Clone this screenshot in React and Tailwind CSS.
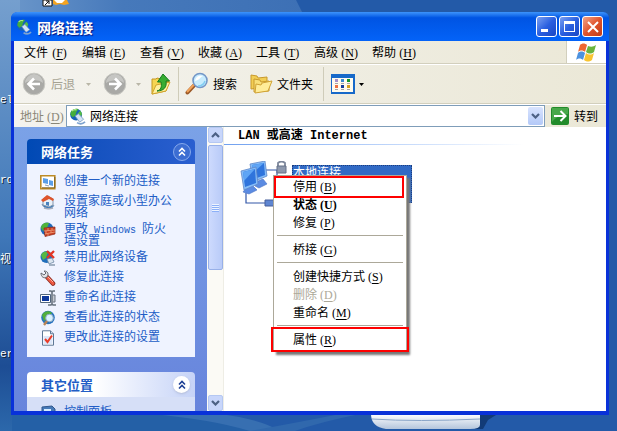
import React from 'react';

const cjk = "font-['Noto_Sans_CJK_SC',sans-serif]";

function Key({ k }) {
  return (
    <span className="inline-block w-5 pl-[3px] whitespace-nowrap font-['Liberation_Serif',serif] text-[12px] leading-3">
      (<span className="underline underline-offset-2">{k}</span>)
    </span>
  );
}

function Globe({ className = '' }) {
  return (
    <svg viewBox="0 0 18 18" className={`shrink-0 ${className}`} aria-hidden="true">
      <circle cx="7.5" cy="7" r="6.3" fill="#1763b8" />
      <path d="M2 4C4 .8 8 .2 10 1.2L8 4 6.8 8.2 3.7 9.8 1.4 7Z" fill="#45ae3c" />
      <path d="M9 6 12 3l1.8 3-1.5 4-3-1Z" fill="#55bd42" />
      <path d="M3 3.2C4.7 1.5 6.5 1.5 8 2" stroke="#b7ed91" strokeWidth="1.2" fill="none" />
      <path d="m6.5 8.5 3.5-2.5 5.5 6-4.2 3Z" fill="#d3e2f4" stroke="#6f93bd" strokeWidth=".8" />
      <path d="M8.5 15.5c3 1.8 6 1.5 8.5-.8" fill="none" stroke="#7ea3cf" strokeWidth="1.8" />
    </svg>
  );
}

function RoundArrow({ flip }) {
  return (
    <svg viewBox="0 0 24 24" className="size-6 shrink-0" aria-hidden="true">
      <circle cx="12" cy="12" r="10.8" fill="#a9a9a6" stroke="#c9c9c3" />
      <path d="M3 11A9 9 0 0 1 21 11C16 7 8 8 3 11Z" fill="#c6c6c3" />
      <g transform={flip ? 'rotate(180 12 12)' : undefined}>
        <path d="M18 12H7M12 6.5 6.5 12l5.5 5.5" fill="none" stroke="#fff" strokeWidth="2.6" />
      </g>
    </svg>
  );
}

function Caret({ className = '' }) {
  return (
    <svg viewBox="0 0 5 3" className={`h-[3px] w-[5px] shrink-0 ${className}`} aria-hidden="true">
      <path d="M0 0h5L2.5 3Z" fill="currentColor" />
    </svg>
  );
}

function FolderUp() {
  return (
    <svg viewBox="0 0 22 24" className="h-6 w-[22px] shrink-0" aria-hidden="true">
      <path d="M2 7V22L16 19 19 9 12 10 11 7 7 6 6 7Z" fill="#f6d552" stroke="#c49620" />
      <path d="m2 22 4-9 14-3-4 9Z" fill="#fff0a0" stroke="#d1a52c" />
      <path d="M7 19c4-1 5-4 4-9H7.5L13 2l6.5 7H16c1 6-2 10-9 10Z" fill="#37ad32" stroke="#147a1d" />
    </svg>
  );
}

function SearchGlass() {
  return (
    <svg viewBox="0 0 24 24" className="size-6 shrink-0" aria-hidden="true">
      <path d="m9.5 13-7 7.5" stroke="#9c5926" strokeWidth="4" strokeLinecap="round" />
      <path d="m8.5 13-6 6.5" stroke="#f2a359" strokeWidth="2" strokeLinecap="round" />
      <circle cx="15" cy="8.5" r="7" fill="#c8ecfd" stroke="#7497c7" strokeWidth="1.6" />
      <path d="M10 9c1-5 4-6 8-5-3 1-3 4-8 5Z" fill="#fff" />
      <path d="M13 14c4 0 6-2 7-5" fill="none" stroke="#81cdf2" strokeWidth="1.5" />
    </svg>
  );
}

function Folders() {
  return (
    <svg viewBox="0 0 24 22" className="h-[22px] w-6 shrink-0" aria-hidden="true">
      <path d="M2 16V2l6 1 1 2 9-1v10Z" fill="#f2ce55" stroke="#c8992d" />
      <path d="M5 19V6l6 1 1 2 8-1v10Z" fill="#f8df78" stroke="#c8992d" />
      <path d="m6 20 1-9 5 1 1-2 10-2-4 10Z" fill="#ffec98" stroke="#d0a335" />
    </svg>
  );
}

function ViewGrid() {
  const dots = [
    [4, 6, '#a68fc8'], [10, 6, '#3b8ad0'], [16, 6, '#16992b'],
    [4, 12, '#ee7241'], [10, 12, '#153d9c'], [16, 12, '#d6a020'],
  ];
  return (
    <svg viewBox="0 0 24 20" className="h-5 w-6 shrink-0" shapeRendering="crispEdges" aria-hidden="true">
      <rect width="24" height="20" fill="#1769c9" />
      <rect x="1" y="4" width="21" height="14" fill="#fffbee" />
      {dots.map(([x, y, c]) => (
        <g key={`${x}-${y}`}>
          <rect x={x} y={y - 1} width="3" height="3" fill={c} />
          <rect x={x} y={y + 3} width="3" height="1" fill="#a5a5a5" />
        </g>
      ))}
    </svg>
  );
}

function WindowsFlag() {
  return (
    <svg viewBox="0 0 21 19" className="h-[19px] w-[21px]" aria-hidden="true">
      <path d="M4 2c2-2 5-2 7 0L9 9C7 7 4 7 2 9Z" fill="#ee6631" />
      <path d="M12 3c3 1 5 1 8-1l-2 7c-3 2-5 2-8 0Z" fill="#69b43d" />
      <path d="M2 10c2-2 5-2 7 0l-2 7c-2-2-5-2-7 0Z" fill="#4d92df" />
      <path d="M10 10c3 2 5 2 8 0l-2 7c-3 2-5 2-8 0Z" fill="#f8c431" />
    </svg>
  );
}

function TaskIcon({ kind }) {
  return (
    <svg viewBox="0 0 16 16" className="size-4 shrink-0" aria-hidden="true">
      {kind === 'new' && (
        <g>
          <path d="M.8 1.8h14v13H.8Z" fill="#fff" stroke="#bd8b26" strokeWidth="1.6" />
          <path d="M2 13.8h12.8V3" fill="none" stroke="#80621f" />
          <path d="m3 4 5 1v5L3 9Zm6 2 4 1v5l-4-1Z" fill="#5b9ee7" />
          <path d="m5 11 4 1" stroke="#8d9cac" />
        </g>
      )}
      {kind === 'home' && (
        <g>
          <path d="M2 10c1 5 10 7 12 1" fill="#2e75bd" stroke="#8fa5b9" />
          <path d="M3 5v6l6 2 4-2V5L8 2Z" fill="#e9f0f7" stroke="#8697ad" />
          <path d="M1 6 7 1l7 4-1 2-4-2-6 3Z" fill="#df542b" />
          <path d="M6 8h3v4L6 11Z" fill="#4a82bd" />
          <path d="M4 14c3 1 6 1 9 0" stroke="#a6aebd" strokeWidth="1.6" fill="none" />
        </g>
      )}
      {kind === 'wall' && (
        <g>
          <circle cx="7" cy="7" r="6.5" fill="#206aba" />
          <path d="M1 6C1 2 5 0 9 1L7 6 3 9Z" fill="#50b33b" />
          <path d="m4 6 11-1v7L5 14.5Z" fill="#ca3f22" stroke="#8e2a18" strokeWidth=".7" />
          <path d="m4 9 11-1M5 12l10-2M8 6v3m4-3v2m-6 1v3m5-3v2m-3 1v2" stroke="#f0a27d" strokeWidth=".8" />
        </g>
      )}
      {kind === 'off' && (
        <g>
          <circle cx="6.5" cy="7" r="6" fill="#206ebb" />
          <path d="M1 5C3 1 6 1 8 2L6 8 3 10Z" fill="#57b843" />
          <path d="m7 9 5-1 2 4-5 2Z" fill="#dbe5ef" stroke="#6f89a5" strokeWidth=".8" />
          <path d="m7 1 7 7m0-7L7 8" stroke="#e33524" strokeWidth="2.3" />
          <path d="M9 15h6" stroke="#8194a9" strokeWidth="1.4" />
        </g>
      )}
      {kind === 'wrench' && (
        <g>
          <path d="m7.5 7.5 5.5 6" stroke="#8f2c22" strokeWidth="4.6" strokeLinecap="round" />
          <path d="m7.5 7.5 5.5 6" stroke="#ef5a44" strokeWidth="2.8" strokeLinecap="round" />
          <path d="m8 7 5 5" stroke="#ffb19d" />
          <path d="M4 1c4 0 5 3 3 6-3 2-6 0-6-4l3 2 2-2Z" fill="#e4e4e8" stroke="#666a72" />
        </g>
      )}
      {kind === 'rename' && (
        <g>
          <path d="M.5 4.5h10v8H.5Z" fill="#fff" stroke="#53677d" />
          <path d="M2 6h7v5H2Z" fill="#0d379c" />
          <path d="M9 1h2l1 1 1-1h2M12 2v12m-4 1h3l1-1 1 1h3" fill="none" stroke="#66717e" strokeWidth="1.6" />
          <path d="M13 5h2v7h-2" fill="#c5cad2" stroke="#66717e" />
        </g>
      )}
      {kind === 'status' && (
        <g>
          <circle cx="8" cy="7.5" r="6.8" fill="#2672bf" />
          <path d="M2 5c2-4 7-5 10-2L8 8 4 11Z" fill="#50ae3c" />
          <circle cx="9.5" cy="8" r="3.8" fill="#d9f1ff" stroke="#8ca9c5" />
          <path d="m7 11-3 4" stroke="#b98455" strokeWidth="2.3" />
        </g>
      )}
      {kind === 'settings' && (
        <g>
          <path d="M2.5.8h8l3 3v11.4h-11Z" fill="#fff" stroke="#5e7896" />
          <path d="M10.5.8v3h3" fill="#ccdbed" stroke="#5e7896" />
          <path d="M3.5 6h9v8h-9Z" fill="#dce7fa" />
          <path d="m5 9 2.5 3L12 5.5" fill="none" stroke="#ea3c28" strokeWidth="2" />
        </g>
      )}
      {kind === 'panel' && (
        <g>
          <path d="m2 2 10-1 3 3v10H2Z" fill="#477ab8" stroke="#31588d" />
          <path d="M4 4h7v7H4Z" fill="#d8ecff" />
        </g>
      )}
    </svg>
  );
}

function Chevrons() {
  return (
    <svg viewBox="0 0 8 10" className="h-[10px] w-2" aria-hidden="true">
      <path d="m1 4.5 3-3 3 3m-6 4 3-3 3 3" fill="none" stroke="currentColor" strokeWidth="1.6" />
    </svg>
  );
}

function Chevron({ up }) {
  return (
    <svg viewBox="0 0 9 6" className="h-[6px] w-[9px]" aria-hidden="true">
      <path d={up ? 'm1 5 3.5-3.5L8 5' : 'm1 1 3.5 3.5L8 1'} fill="none" stroke="#4d6185" strokeWidth="2.2" />
    </svg>
  );
}

const menus = [['文件', 'F'], ['编辑', 'E'], ['查看', 'V'], ['收藏', 'A'], ['工具', 'T'], ['高级', 'N'], ['帮助', 'H']];

const tasks = [
  ['new', '创建一个新的连接'],
  ['home', '设置家庭或小型办公网络'],
  ['wall', <>更改<span className="font-['Liberation_Mono',monospace] text-[10px] leading-[0px] whitespace-pre"> Windows </span>防火<br />墙设置</>],
  ['off', '禁用此网络设备'],
  ['wrench', '修复此连接'],
  ['rename', '重命名此连接'],
  ['status', '查看此连接的状态'],
  ['settings', '更改此连接的设置'],
];

function TitleBar() {
  const btn = 'flex size-[21px] items-center justify-center rounded-[3px] border border-white';
  return (
    <header className="flex h-[29px] shrink-0 items-center gap-[5px] rounded-t-[6px] bg-linear-to-b from-[#3d94fb] via-[#0054e3] via-20% to-[#0463f8] pr-[6px] pl-[5px]">
      <Globe className="size-4" />
      <h1 className="flex-1 text-[14px] leading-5 font-bold text-white [text-shadow:1px_1px_1px_#0a1883]">网络连接</h1>
      <div className="flex gap-[2px]">
        <button aria-label="最小化" className={`${btn} bg-linear-to-br from-[#7c9ff0] via-[#2a5fe0] to-[#1946c4]`}>
          <span className="mt-2 mr-1 h-[3px] w-[7px] bg-white" />
        </button>
        <button aria-label="最大化" className={`${btn} bg-linear-to-br from-[#7c9ff0] via-[#2a5fe0] to-[#1946c4]`}>
          <span className="h-[11px] w-[11px] border border-t-[3px] border-white" />
        </button>
        <button aria-label="关闭" className={`${btn} bg-linear-to-br from-[#f0a286] via-[#e0532c] to-[#c23c16]`}>
          <svg viewBox="0 0 12 12" className="size-3" aria-hidden="true">
            <path d="m1 1 10 10M11 1 1 11" stroke="#fff" strokeWidth="2" />
          </svg>
        </button>
      </div>
    </header>
  );
}

function MenuBar() {
  return (
    <div className="flex h-[23px] shrink-0 border-b border-[#d2cfbd]">
      <nav className="flex flex-1 items-center gap-[14px] border-r border-[#d2cfbd] pl-[10px]">
        {menus.map(([label, k]) => (
          <button key={k} className="leading-3 whitespace-nowrap">{label}<Key k={k} /></button>
        ))}
      </nav>
      <div className="flex w-[39px] items-center justify-center bg-white"><WindowsFlag /></div>
    </div>
  );
}

function Toolbar() {
  return (
    <div className="flex h-10 shrink-0 items-center border-t border-b border-t-white border-b-[#d2cfbd] pl-2">
      <button disabled className="flex items-center gap-[5px] text-[#a5a293]"><RoundArrow />后退</button>
      <Caret className="mx-[11px] text-[#b9b6a7]" />
      <button disabled aria-label="前进" className="ml-px"><RoundArrow flip /></button>
      <Caret className="mx-[9px] text-[#b9b6a7]" />
      <button aria-label="向上"><FolderUp /></button>
      <span className="ml-[6px] h-[34px] border-l border-[#cfccb9]" />
      <button className="ml-[6px] flex items-center gap-1"><SearchGlass />搜索</button>
      <button className="ml-3 flex items-center gap-1"><Folders />文件夹</button>
      <span className="ml-[10px] h-[34px] border-l border-[#cfccb9]" />
      <button aria-label="查看方式" className="ml-[7px] flex items-center gap-1"><ViewGrid /><Caret /></button>
    </div>
  );
}

function AddressBar() {
  return (
    <form className="flex h-[23px] shrink-0 items-center border-t border-white" onSubmit={(e) => e.preventDefault()}>
      <label htmlFor="address" className="w-[52px] shrink-0 pl-[6px] whitespace-nowrap text-[#8a8778]">地址<Key k="D" /></label>
      <div className="flex h-[22px] flex-1 items-center border border-[#7f9db9] bg-white pr-px pl-[2px]">
        <Globe className="size-[17px]" />
        <input id="address" defaultValue="网络连接" className="min-w-0 flex-1 bg-transparent px-1 leading-5 outline-none" />
        <button type="button" aria-label="展开地址列表" className="flex h-[18px] w-[15px] items-center justify-center rounded-[2px] bg-linear-to-b from-[#d9e4fe] to-[#b3c9f8]">
          <Chevron />
        </button>
      </div>
      <button className="mr-2 ml-[6px] flex items-center gap-[5px]">
        <svg viewBox="0 0 18 18" className="size-[18px]" aria-hidden="true">
          <rect width="18" height="18" rx="2" fill="#228b2b" />
          <path d="M1 1h16v6C10 8 5 10 1 15Z" fill="#48a84a" />
          <path d="M3 9h11M9.5 4l5 5-5 5" fill="none" stroke="#fff" strokeWidth="2" />
        </svg>
        转到
      </button>
    </form>
  );
}

function Sidebar() {
  return (
    <aside className="flex w-[193px] shrink-0 flex-col gap-[15px] overflow-hidden bg-linear-to-b from-[#7ba2e7] to-[#6784dc] px-3 pt-3 pl-[13px]">
      <section className="shrink-0">
        <div className="flex h-[25px] items-center justify-between rounded-t-[4px] bg-linear-to-r from-[#0049b4] to-[#2a5fd0] pr-1 pl-[14px] text-white">
          <h2 className="text-[13px] font-bold">网络任务</h2>
          <button aria-label="折叠网络任务" className="flex size-[18px] items-center justify-center rounded-full border border-[#86a9ec] bg-[#3c6dd2]"><Chevrons /></button>
        </div>
        <ul className="flex flex-col gap-1 bg-[#eff3ff] pt-[10px] pr-4 pb-[11px] pl-[13px]">
          {tasks.map(([kind, label]) => (
            <li key={kind}>
              <a href="#" className="flex min-h-4 gap-2 leading-3 text-[#215dc6]">
                <TaskIcon kind={kind} />
                <span className="w-[110px]">{label}</span>
              </a>
            </li>
          ))}
        </ul>
      </section>
      <section className="shrink-0">
        <div className="flex h-[25px] items-center justify-between rounded-t-[4px] bg-linear-to-r from-white from-40% to-[#c6d3f7] pr-[5px] pl-[14px] text-[#215dc6]">
          <h2 className="text-[13px] font-bold">其它位置</h2>
          <button aria-label="折叠其它位置" className="flex size-[17px] items-center justify-center rounded-full bg-white text-[#1c3f94] shadow"><Chevrons /></button>
        </div>
        <ul className="bg-[#d6dff7] pt-2 pb-3 pl-[13px]">
          <li><a href="#" className="flex gap-2 leading-3 text-[#215dc6]"><TaskIcon kind="panel" />控制面板</a></li>
        </ul>
      </section>
    </aside>
  );
}

function ScrollBar() {
  const end = 'flex h-4 w-[15px] shrink-0 items-center justify-center rounded-[2px] border border-[#b5c8f2] bg-[#c8d6fb]';
  return (
    <div className="flex w-[17px] shrink-0 flex-col items-center border-r border-[#eeede5] bg-[#fbfaf5]">
      <button aria-label="向上滚动" className={end}><Chevron up /></button>
      <div className="mt-[2px] flex h-[125px] w-[15px] flex-col items-center justify-center gap-px rounded-[2px] border border-[#98b0e8] bg-linear-to-r from-[#cddafd] to-[#b9cbf8]">
        {[0, 1, 2, 3].map((i) => (
          <span key={i} className="h-px w-[7px] bg-[#eef4fe] shadow-[0_1px_#8cb0f8]" />
        ))}
      </div>
      <div className="flex-1" />
      <button aria-label="向下滚动" className={end}><Chevron /></button>
    </div>
  );
}

function LanIcon() {
  return (
    <svg viewBox="0 0 50 50" className="h-[50px] w-[50px] shrink-0" aria-hidden="true">
      <path d="M25 9h12v10M6 32v10h20" fill="none" stroke="#3357a8" strokeWidth="1.2" />
      <path d="m18 20 5-2 4 5-8 4-4-2Z" fill="#5b8be2" stroke="#4a74c4" strokeWidth=".6" />
      <path d="m10 3 15-3 2 15-14 6Z" fill="#86bdf8" stroke="#5f86c8" strokeWidth=".8" />
      <path d="m12 4 12-2 1 12-11 4Z" fill="#2f74dc" />
      <path d="m12 4 12-2-11 10Z" fill="#5fa5f5" />
      <path d="m6 27 6-3 5 5-8 4-6-2Z" fill="#5b8be2" stroke="#4a74c4" strokeWidth=".6" />
      <path d="m1 10 15-4 2 17-14 6Z" fill="#86bdf8" stroke="#5f86c8" strokeWidth=".8" />
      <path d="m3 11 12-3 1 14-11 4Z" fill="#2f74dc" />
      <path d="m3 11 12-3-11 12Z" fill="#5fa5f5" />
      <path d="M38 6V2q3.500-3 7 0v4" fill="none" stroke="#7d879b" strokeWidth="1.8" />
      <path d="M37 5h9v7h-9Z" fill="#8d98ad" stroke="#657087" />
      <path d="M25 39h9v6h-9Z" fill="#5f86d2" stroke="#465f9b" />
    </svg>
  );
}

function ContextMenu() {
  const item = 'h-[18px] w-full pl-[17px] text-left leading-[18px] whitespace-nowrap';
  const rule = <hr className="mx-px my-1 border-[#aca899]" />;
  return (
    <div role="menu" className="absolute top-12 left-[49px] w-[134px] border border-[#aca899] bg-white px-[2px] pt-px pb-[3px] shadow-[3px_3px_2px_#777]">
      <button role="menuitem" className={item}>停用<Key k="B" /></button>
      <button role="menuitem" className={`${item} font-bold`}>状态<Key k="U" /></button>
      <button role="menuitem" className={item}>修复<Key k="P" /></button>
      {rule}
      <button role="menuitem" className={item}>桥接<Key k="G" /></button>
      {rule}
      <button role="menuitem" className={item}>创建快捷方式<Key k="S" /></button>
      <button role="menuitem" disabled className={`${item} text-[#aca899]`}>删除<Key k="D" /></button>
      <button role="menuitem" className={item}>重命名<Key k="M" /></button>
      {rule}
      <button role="menuitem" className={item}>属性<Key k="R" /></button>
      <div className="pointer-events-none absolute top-0 left-0 h-[22px] w-[130px] border-2 border-[#fe0000]" />
      <div className="pointer-events-none absolute -right-[3px] -bottom-px -left-[3px] h-[25px] border-2 border-[#fe0000]" />
    </div>
  );
}

function Connections() {
  return (
    <main className="relative min-w-0 flex-1 bg-white">
      <h2 className="h-[17px] pl-[14px] font-['Liberation_Mono','Noto_Sans_CJK_SC',monospace] leading-[18px] font-bold">LAN 或高速 Internet</h2>
      <div className="h-px w-[300px] bg-linear-to-r from-[#70a0ef] to-white" />
      <div className="flex gap-[2px] pt-4 pl-4">
        <LanIcon />
        <div className="mt-1 h-[38px] w-[120px] border border-dotted border-[#1b3d7e] bg-[#316ac5] text-white">
          <p className="leading-3">本地连接</p>
        </div>
      </div>
      <ContextMenu />
    </main>
  );
}

function Desktop() {
  const label = "absolute left-0 font-['Liberation_Mono','Noto_Sans_CJK_SC',monospace] text-[11px] leading-3 text-white [text-shadow:1px_1px_#123]";
  return (
    <div className="absolute inset-0 overflow-hidden bg-[#235aa8]">
      <svg viewBox="0 0 617 431" preserveAspectRatio="none" className="size-full" aria-hidden="true">
        <defs>
          <linearGradient id="sky" x1="0" y1="0" x2="1" y2="0">
            <stop offset="0" stopColor="#6e99cb" />
            <stop offset=".4" stopColor="#4679bb" />
            <stop offset="1" stopColor="#3d70b5" />
          </linearGradient>
          <linearGradient id="side" x1="0" y1="0" x2="0" y2="1">
            <stop offset="0" stopColor="#759fce" />
            <stop offset=".55" stopColor="#3f77b8" />
            <stop offset=".85" stopColor="#1d4d94" />
            <stop offset="1" stopColor="#2c68ab" />
          </linearGradient>
          <linearGradient id="plate" x1="0" y1="0" x2="0" y2="1">
            <stop offset="0" stopColor="#fff" />
            <stop offset="1" stopColor="#b4c5dc" />
          </linearGradient>
        </defs>
        <path d="M0 0H296L306 20H0Z" fill="url(#sky)" />
        <path d="M0 0H20V431H0Z" fill="url(#side)" />
        <path d="M12 413H200L260 431H12Z" fill="#2460a6" />
        <path d="M150 414q60 5 100 17h30q-20-12-60-17Z" fill="#376fb1" />
        <path d="M250 431q50-9 90-17h20q-40 8-65 17Z" fill="#3068ad" />
        <path d="M480 415h16l-8 5-5 9h-8Z" fill="#123b77" />
        <path d="M371 414h109v11q0 4-10 4h-84q-15-2-15-15Z" fill="url(#plate)" />
        <path d="M372 419q45 3 108 0" stroke="#8aa5c8" fill="none" />
        <g>
          <path d="M43 0h9v6h-9Z" fill="#fff" stroke="#111" />
          <path d="m45 5 4-4m-3 0h3v3" stroke="#111" fill="none" />
          <path d="M53 0h14l2 4-5 1-4-1-4 1-3-1Z" fill="#f4a422" />
          <path d="M54 0h11l-3 3h-5Z" fill="#fff" />
        </g>
      </svg>
      <span className={`${label} top-[94px]`}>el</span>
      <span className={`${label} top-[149px] pt-[25px]`}>rd</span>
      <span className={`${label} top-[254px]`}>视</span>
      <span className={`${label} top-[348px]`}>er</span>
    </div>
  );
}

export default function App() {
  return (
    <div className={`relative flex h-screen flex-col overflow-hidden pt-3 pr-2 pb-4 pl-[11px] text-[12px] leading-4 text-black ${cjk}`}>
      <Desktop />
      <div className="relative flex min-h-0 flex-1 flex-col rounded-t-[7px] bg-[#0831d9]">
        <TitleBar />
        <div className="mx-[3px] mb-1 flex min-h-0 flex-1 flex-col bg-[#ece9d8]">
          <div className="shrink-0 bg-linear-to-r from-[#f4f3ee] to-[#ebe8d7]">
            <MenuBar />
            <Toolbar />
            <AddressBar />
          </div>
          <div className="flex min-h-0 flex-1">
            <Sidebar />
            <ScrollBar />
            <Connections />
          </div>
        </div>
      </div>
    </div>
  );
}
